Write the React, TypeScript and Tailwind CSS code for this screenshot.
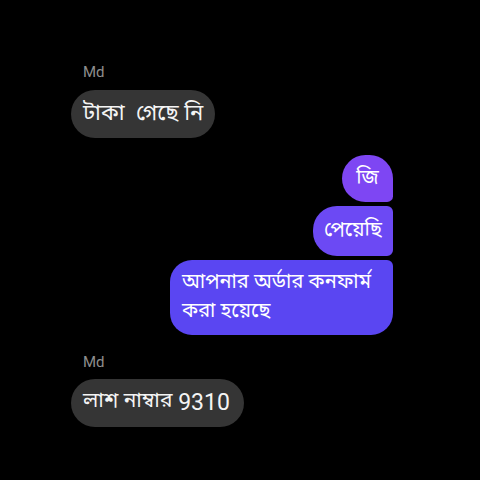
import React from "react";

const font = { fontFamily: '"Noto Sans Bengali", "Noto Sans", "Lato", sans-serif' };

export default function App() {
  return (
    <div className="w-[480px] h-[480px] bg-black overflow-hidden" style={font}>
      <div className="flex flex-col pl-[71px] pr-[87px] pt-[63px]">
        <div className="pl-[12px] text-[15px] leading-[18px] text-[#8e8e8e]" style={{ fontFamily: '"Roboto", sans-serif' }}>Md</div>
        <div className="mt-[9px] self-start h-[48px] px-[12px] flex items-center rounded-[24px] bg-[#353535] text-[#f4f4f4] text-[22px]">
          টাকা&nbsp; গেছে নি
        </div>

        <div className="mt-[17px] self-end flex flex-col items-end gap-[4px]">
          <div className="h-[47px] w-[51px] flex items-center justify-center rounded-[24px] rounded-br-[6px] bg-[#7e46f3] text-white text-[20px]">
            জি
          </div>
          <div className="h-[50px] px-[11px] flex items-center rounded-[24px] rounded-tr-[6px] rounded-br-[6px] bg-[#6c49f4] text-white text-[20px]">
            পেয়েছি
          </div>
          <div className="w-[223px] h-[75px] px-[12px] flex flex-col justify-center rounded-[22px] rounded-tr-[6px] bg-[#5a46f2] text-white text-[20px] leading-[29px]">
            <span>আপনার অর্ডার কনফার্ম</span>
            <span>করা হয়েছে</span>
          </div>
        </div>

        <div className="mt-[18px] pl-[12px] text-[15px] leading-[18px] text-[#8e8e8e]" style={{ fontFamily: '"Roboto", sans-serif' }}>Md</div>
        <div className="mt-[8px] self-start h-[48px] pl-[12px] pr-[14px] flex items-center rounded-[24px] bg-[#353535] text-[#f4f4f4] text-[21px]">
          লাশ নাম্বার<span className="text-[23px]" style={{ fontFamily: '"Roboto", sans-serif' }}>&nbsp;9310</span>
        </div>
      </div>
    </div>
  );
}
